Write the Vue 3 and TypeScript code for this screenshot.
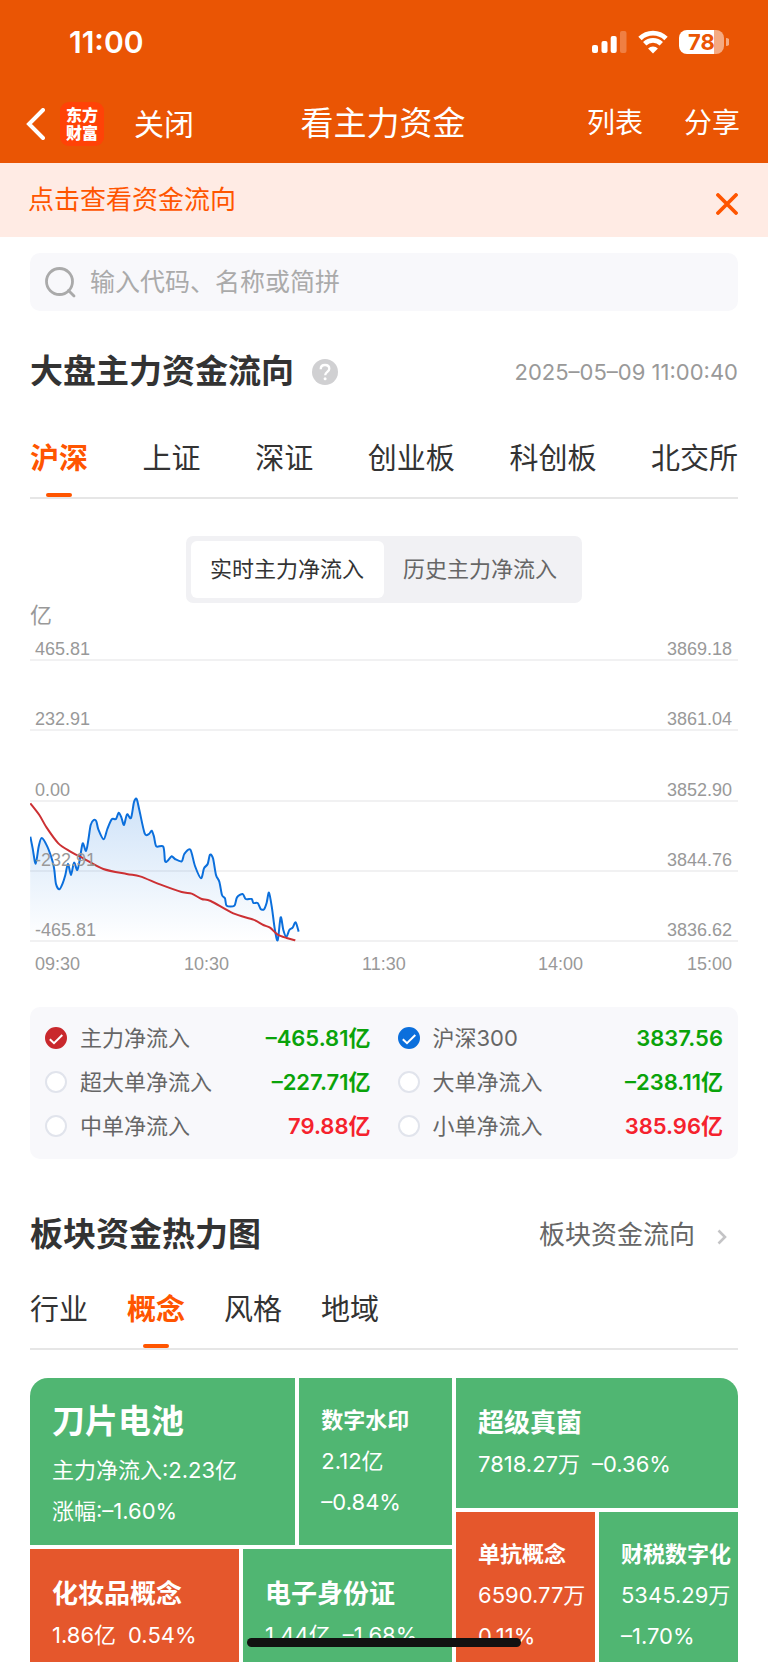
<script setup lang="ts">
import { ref } from 'vue'

type Point = [number, number]

interface Series {
  name: string
  value: string
  trend: 'up' | 'down'
  tint: string
  on: boolean
}

interface Tile {
  name: string
  lines: string[][]
  size: 'large' | 'medium' | 'small'
  trend: 'up' | 'down'
}

const markets = ['沪深', '上证', '深证', '创业板', '科创板', '北交所']
const market = ref('沪深')
const modes = ['实时主力净流入', '历史主力净流入']
const mode = ref(modes[0])
const groups = ['行业', '概念', '风格', '地域']
const group = ref('概念')
const keyword = ref('')
const noticeOpen = ref(true)

const rows = [
  { y: 20, flow: '465.81', index: '3869.18' },
  { y: 90, flow: '232.91', index: '3861.04' },
  { y: 161, flow: '0.00', index: '3852.90' },
  { y: 231, flow: '-232.91', index: '3844.76' },
  { y: 301, flow: '-465.81', index: '3836.62' },
]
const times = [
  { x: 5, text: '09:30' },
  { x: 154, text: '10:30' },
  { x: 332, text: '11:30' },
  { x: 508, text: '14:00' },
  { x: 657, text: '15:00' },
]

// Samples are kept at three units per chart pixel.
const indexSamples: Point[] = [
  [31, 170], [38, 205], [47, 251], [56, 200], [65, 174], [82, 200], [98, 245], [103, 270], [108, 312],
  [118, 328], [128, 310], [136, 285], [144, 251], [153, 285], [162, 248], [172, 270], [180, 235],
  [188, 190], [198, 213], [205, 180], [212, 135], [221, 120], [229, 124], [235, 148], [251, 178],
  [262, 147], [275, 118], [288, 117], [296, 98], [304, 112], [312, 135], [321, 103], [333, 114],
  [342, 66], [350, 57], [358, 90], [374, 160], [387, 162], [395, 152], [402, 170], [409, 199],
  [430, 200], [435, 243], [442, 243], [455, 229], [465, 237], [485, 244], [493, 222], [511, 209],
  [525, 258], [543, 295], [552, 265], [563, 252], [570, 224], [579, 235], [588, 285], [598, 305],
  [606, 345], [615, 355], [620, 377], [643, 377], [651, 352], [668, 342], [677, 357], [695, 357],
  [700, 369], [713, 369], [722, 387], [732, 388], [740, 368], [747, 338], [756, 385], [764, 445],
  [773, 481], [782, 412], [790, 450], [799, 471], [808, 450], [818, 443], [827, 427], [836, 455],
]
const flowSamples: Point[] = [
  [31, 70], [58, 105], [80, 143], [115, 190], [150, 214], [190, 235], [250, 267], [320, 282],
  [360, 289], [420, 313], [485, 336], [515, 341], [545, 357], [572, 363], [640, 400], [700, 419],
  [730, 435], [750, 443], [772, 463], [800, 474], [826, 481],
]

function curve(samples: Point[]): string {
  const pts = samples.map(([x, y]): Point => [x / 3 - 10, y / 3 + 140])
  let d = `M${pts[0][0]} ${pts[0][1]}`
  for (let i = 0; i < pts.length - 1; i++) {
    const a = pts[Math.max(i - 1, 0)]
    const b = pts[i]
    const c = pts[i + 1]
    const e = pts[Math.min(i + 2, pts.length - 1)]
    d += `C${b[0] + (c[0] - a[0]) / 7} ${b[1] + (c[1] - a[1]) / 7} ${c[0] - (e[0] - b[0]) / 7} ${c[1] - (e[1] - b[1]) / 7} ${c[0]} ${c[1]}`
  }
  return d
}
const indexLine = curve(indexSamples)
const flowLine = curve(flowSamples)
const indexArea = `${indexLine}V301H0Z`

const series = ref<Series[]>([
  { name: '主力净流入', value: '–465.81亿', trend: 'down', tint: 'red', on: true },
  { name: '沪深300', value: '3837.56', trend: 'down', tint: 'blue', on: true },
  { name: '超大单净流入', value: '–227.71亿', trend: 'down', tint: 'blue', on: false },
  { name: '大单净流入', value: '–238.11亿', trend: 'down', tint: 'blue', on: false },
  { name: '中单净流入', value: '79.88亿', trend: 'up', tint: 'blue', on: false },
  { name: '小单净流入', value: '385.96亿', trend: 'up', tint: 'blue', on: false },
])

const tileBlocks: { area: string; tiles: Tile[] }[] = [
  {
    area: 'left-top',
    tiles: [
      { name: '刀片电池', lines: [['主力净流入:2.23亿'], ['涨幅:–1.60%']], size: 'large', trend: 'down' },
      { name: '数字水印', lines: [['2.12亿'], ['–0.84%']], size: 'small', trend: 'down' },
    ],
  },
  {
    area: 'left-bottom',
    tiles: [
      { name: '化妆品概念', lines: [['1.86亿', '0.54%']], size: 'medium', trend: 'up' },
      { name: '电子身份证', lines: [['1.44亿', '–1.68%']], size: 'medium', trend: 'down' },
    ],
  },
  {
    area: 'right-top',
    tiles: [{ name: '超级真菌', lines: [['7818.27万', '–0.36%']], size: 'medium', trend: 'down' }],
  },
  {
    area: 'right-bottom',
    tiles: [
      { name: '单抗概念', lines: [['6590.77万'], ['0.11%']], size: 'small', trend: 'up' },
      { name: '财税数字化', lines: [['5345.29万'], ['–1.70%']], size: 'small', trend: 'down' },
    ],
  },
]
const columns = [tileBlocks.slice(0, 2), tileBlocks.slice(2)]
</script>

<template>
  <div class="page">
    <header class="top">
      <div class="status">
        <span class="clock">11:00</span>
        <div class="status-icons">
          <svg width="35" height="24" viewBox="0 0 35 24" fill="#fff" aria-hidden="true">
            <rect x="0" y="15" width="6" height="8" rx="2" />
            <rect x="9.500" y="11" width="6" height="12" rx="2" />
            <rect x="18.700" y="6" width="6" height="17" rx="2" />
            <rect x="28" y="1" width="6.500" height="22" rx="2" opacity=".25" />
          </svg>
          <svg width="30" height="24" viewBox="0 0 30 24" aria-hidden="true">
            <g fill="none" stroke="#fff" stroke-width="4.800">
              <path d="M2 8.500a18.500 18.500 0 0 1 26 0" />
              <path d="M6.700 13.800a12 12 0 0 1 16.600 0" />
            </g>
            <path fill="#fff" d="M15 23.500l-4.900-5a6.900 6.900 0 0 1 9.800 0z" />
          </svg>
          <div class="battery">
            <span class="cell">78</span>
            <svg width="3" height="8" viewBox="0 0 3 8" aria-hidden="true">
              <path d="M0 0a4 4 0 0 1 0 8z" fill="#fff" opacity=".5" />
            </svg>
          </div>
        </div>
      </div>
      <nav class="nav">
        <div class="nav-side">
          <button class="back" aria-label="返回">
            <svg width="19" height="32" viewBox="0 0 19 32" aria-hidden="true">
              <path d="M17 2L3 16l14 14" fill="none" stroke="#fff" stroke-width="4" stroke-linecap="round" />
            </svg>
          </button>
          <span class="logo"><span>东方</span><span>财富</span></span>
          <button class="close">关闭</button>
        </div>
        <h1>看主力资金</h1>
        <div class="nav-side nav-end">
          <button>列表</button>
          <button>分享</button>
        </div>
      </nav>
    </header>

    <div v-if="noticeOpen" class="notice">
      <a href="#flow">点击查看资金流向</a>
      <button aria-label="关闭提示" @click="noticeOpen = false">
        <svg width="22" height="22" viewBox="0 0 22 22" aria-hidden="true">
          <path d="M2 2l18 18M20 2L2 20" fill="none" stroke="#ff5500" stroke-width="3.800" stroke-linecap="round" />
        </svg>
      </button>
    </div>

    <main>
      <label class="search">
        <svg width="31" height="31" viewBox="0 0 31 31" fill="none" stroke="#aaa" stroke-width="2.800" aria-hidden="true">
          <circle cx="14.500" cy="14.500" r="13" />
          <path d="M23.500 23.500l5.500 5.500" stroke-linecap="round" />
        </svg>
        <input v-model="keyword" type="text" aria-label="搜索" placeholder="输入代码、名称或简拼" />
      </label>

      <section id="flow">
        <div class="heading first">
          <h2>大盘主力资金流向</h2>
          <button class="help" aria-label="说明">
            <svg width="26" height="26" viewBox="0 0 26 26" aria-hidden="true">
              <circle cx="13" cy="13" r="13" fill="#d0d0d2" />
              <path d="M8.700 10.200c0-2.600 1.800-4.200 4.300-4.200s4.300 1.500 4.300 3.800c0 3-4.100 3.300-4.100 6.500" fill="none" stroke="#fff" stroke-width="2.300" />
              <circle cx="13.100" cy="19.700" r="1.500" fill="#fff" />
            </svg>
          </button>
          <time>2025–05–09 11:00:40</time>
        </div>

        <div class="tabs spread">
          <button v-for="m in markets" :key="m" :class="{ active: m === market }" @click="market = m">{{ m }}</button>
        </div>

        <div class="segment">
          <button v-for="m in modes" :key="m" :class="{ active: m === mode }" @click="mode = m">{{ m }}</button>
        </div>

        <p class="unit">亿</p>
        <svg class="chart" viewBox="0 0 708 340" role="img" aria-label="主力净流入走势">
          <defs>
            <linearGradient id="fade" x1="0" y1="0" x2="0" y2="1">
              <stop offset="0" stop-color="#0b6fdc" stop-opacity=".2" />
              <stop offset="1" stop-color="#0b6fdc" stop-opacity="0" />
            </linearGradient>
          </defs>
          <path v-for="r in rows" :key="r.y" :d="`M0 ${r.y}H708`" stroke="#ececee" stroke-width="1.500" />
          <path :d="indexArea" fill="url(#fade)" />
          <path :d="indexLine" fill="none" stroke="#0b6fdc" stroke-width="2" stroke-linejoin="round" />
          <path :d="flowLine" fill="none" stroke="#cc3033" stroke-width="2" stroke-linejoin="round" />
          <g v-for="r in rows" :key="r.flow">
            <text x="5" :y="r.y - 5">{{ r.flow }}</text>
            <text x="702" :y="r.y - 5" text-anchor="end">{{ r.index }}</text>
          </g>
          <text v-for="t in times" :key="t.text" :x="t.x" y="330">{{ t.text }}</text>
        </svg>

        <div class="legend">
          <label v-for="s in series" :key="s.name">
            <span class="tick" :class="s.tint">
              <input v-model="s.on" type="checkbox" />
              <svg v-if="s.on" width="22" height="22" viewBox="0 0 22 22" aria-hidden="true">
                <path d="M4.800 12.200l4.200 4L17.300 8" fill="none" stroke="#fff" stroke-width="2" />
              </svg>
            </span>
            <span class="series-name">{{ s.name }}</span>
            <strong :class="s.trend">{{ s.value }}</strong>
          </label>
        </div>
      </section>

      <section>
        <div class="heading second">
          <h2>板块资金热力图</h2>
          <a class="more" href="#sectors">
            板块资金流向
            <svg width="10" height="16" viewBox="0 0 10 16" aria-hidden="true">
              <path d="M1.500 1.500L8 8l-6.500 6.500" fill="none" stroke="#c4c4c6" stroke-width="2.600" />
            </svg>
          </a>
        </div>

        <div class="tabs packed">
          <button v-for="g in groups" :key="g" :class="{ active: g === group }" @click="group = g">{{ g }}</button>
        </div>

        <div id="sectors" class="heatmap">
          <div v-for="(blocks, i) in columns" :key="i" class="column">
            <div v-for="b in blocks" :key="b.area" class="block" :class="b.area">
              <article v-for="t in b.tiles" :key="t.name" class="tile" :class="[t.size, t.trend]">
                <h3>{{ t.name }}</h3>
                <p v-for="(line, n) in t.lines" :key="n">
                  <span v-for="part in line" :key="part">{{ part }}</span>
                </p>
              </article>
            </div>
          </div>
        </div>
      </section>
    </main>
    <div class="home-bar"></div>
  </div>
</template>

<style>
body {
  margin: 0;
  background: #fff;
}
</style>

<style scoped>
.page {
  padding-bottom: 1px;
  background: #fff;
  color: #333;
  font-family: Inter, "Noto Sans CJK SC", sans-serif;
  font-size: 22px;
  line-height: 1.2;
}
button {
  margin: 0;
  padding: 0;
  border: 0;
  background: none;
  color: inherit;
  font: inherit;
  white-space: nowrap;
  cursor: pointer;
}
svg {
  display: block;
  flex: none;
}
a {
  color: inherit;
  text-decoration: none;
}
h1,
h2,
h3,
p {
  margin: 0;
}
.top {
  background: #ea5504;
  color: #fff;
}
.status {
  display: flex;
  align-items: center;
  justify-content: space-between;
  height: 84px;
  padding: 0 39px 0 69px;
}
.clock {
  font-size: 30px;
  font-weight: 600;
}
.status-icons {
  display: flex;
  align-items: center;
  gap: 11px;
}
.battery {
  display: flex;
  align-items: center;
  gap: 2px;
}
.cell {
  width: 45px;
  height: 24px;
  border-radius: 8px;
  background: linear-gradient(90deg, #fff 35px, rgba(255, 255, 255, 0.5) 35px);
  color: #ea5504;
  font-weight: 700;
  line-height: 24px;
  text-align: center;
}
.nav {
  display: grid;
  grid-template-columns: 1fr auto 1fr;
  align-items: center;
  height: 79px;
  padding: 0 28px 0 26px;
  font-size: 28px;
}
.nav-side {
  display: flex;
  align-items: center;
}
.nav-end {
  justify-content: flex-end;
  gap: 41px;
}
.nav h1 {
  font-size: 33px;
  font-weight: 400;
}
.logo {
  display: flex;
  flex-direction: column;
  align-items: center;
  justify-content: center;
  width: 44px;
  height: 44px;
  margin-left: 15px;
  border-radius: 9px;
  background: #ff4207;
  font-size: 16px;
  font-weight: 900;
  line-height: 18px;
}
.close {
  margin-left: 30px;
  font-size: 30px;
}
.notice {
  display: flex;
  align-items: center;
  justify-content: space-between;
  height: 74px;
  padding: 0 30px 0 28px;
  background: #ffebe4;
  color: #ff5500;
  font-size: 26px;
}
.notice button {
  padding-top: 8px;
}
main {
  padding: 16px 30px 0;
}
.search {
  display: flex;
  align-items: center;
  gap: 14px;
  height: 58px;
  padding: 0 15px;
  border-radius: 10px;
  background: #f8f8fb;
}
.search input {
  flex: 1;
  min-width: 0;
  padding: 0;
  border: 0;
  outline: 0;
  background: none;
  color: #333;
  font: inherit;
  font-size: 25px;
}
.search input::placeholder {
  color: #aaa;
  opacity: 1;
}
.heading {
  display: flex;
  align-items: center;
  height: 60px;
}
.first {
  margin-top: 31px;
}
.second {
  margin-top: 46px;
}
h2 {
  font-size: 33px;
  font-weight: 600;
}
.help {
  margin-left: 18px;
}
.heading time {
  margin-left: auto;
  color: #999;
}
.more {
  display: flex;
  align-items: center;
  gap: 22px;
  margin-left: auto;
  padding-right: 11px;
  color: #666;
  font-size: 26px;
}
.more svg {
  margin-top: 4px;
}
.tabs {
  display: flex;
  border-bottom: 2px solid #e6e6e6;
  font-size: 29px;
}
.spread {
  justify-content: space-between;
  margin-top: 19px;
}
.packed {
  gap: 39px;
  margin-top: 7px;
}
.tabs button {
  position: relative;
  height: 76px;
}
.tabs .active {
  color: #ff5500;
  font-weight: 600;
}
.tabs .active::after {
  content: "";
  position: absolute;
  bottom: 0;
  left: 50%;
  width: 26px;
  height: 4px;
  margin-left: -13px;
  border-radius: 2px;
  background: #ff5500;
}
.segment {
  display: flex;
  width: fit-content;
  margin: 37px auto 0;
  padding: 5px;
  border-radius: 7px;
  background: #f1f1f4;
  color: #666;
}
.segment button {
  height: 57px;
  padding: 0 20px 0 19px;
  border-radius: 6px;
}
.segment .active {
  background: #fff;
  color: #333;
}
.unit {
  color: #999;
  line-height: 24px;
}
.chart {
  width: 100%;
  height: auto;
  margin-top: 13px;
}
.chart text {
  fill: #999;
  font-family: "Liberation Sans", Arial, sans-serif;
  font-size: 18px;
}
.legend {
  display: grid;
  grid-template-columns: 1fr 1fr;
  column-gap: 27px;
  margin-top: 27px;
  padding: 9px 15px 11px;
  border-radius: 10px;
  background: #f8f8fb;
}
.legend label {
  display: flex;
  align-items: center;
  height: 44px;
}
.tick {
  position: relative;
  width: 22px;
  height: 22px;
  margin-right: 13px;
}
.tick input {
  display: block;
  width: 22px;
  height: 22px;
  margin: 0;
  border: 2px solid #e1e4ec;
  border-radius: 50%;
  background: #fff;
  appearance: none;
}
.tick svg {
  position: absolute;
  inset: 0;
  pointer-events: none;
}
.red input:checked {
  border-color: #c9292d;
  background: #c9292d;
}
.blue input:checked {
  border-color: #0b6fdc;
  background: #0b6fdc;
}
.series-name {
  color: #666;
}
.legend strong {
  margin-left: auto;
  font-weight: 600;
}
.legend .down {
  color: #0aa30a;
}
.legend .up {
  color: #f5222d;
}
.heatmap {
  display: grid;
  grid-template-columns: 422fr 282fr;
  gap: 4px;
  margin-top: 28px;
  overflow: hidden;
  border-radius: 18px 18px 0 0;
}
.column {
  display: flex;
  flex-direction: column;
  gap: 4px;
  min-width: 0;
}
.block {
  display: grid;
  grid-template-columns: 1fr 1fr;
  gap: 4px;
}
.left-top {
  grid-template-columns: 266fr 153fr;
  height: 167px;
}
.left-bottom {
  height: 113px;
}
.right-top {
  grid-template-columns: 1fr;
  height: 130px;
}
.right-bottom {
  height: 150px;
}
.tile {
  min-width: 0;
  padding: 22px 0 0 22px;
  overflow: hidden;
  color: #fff;
  line-height: 41px;
  white-space: nowrap;
}
.tile.down {
  background: #50b672;
}
.tile.up {
  background: #e5572c;
}
.tile h3 {
  font-size: 22px;
  font-weight: 600;
}
.tile.medium {
  padding-top: 24px;
}
.tile.medium h3 {
  margin-bottom: 1px;
  font-size: 26px;
}
.tile.large {
  padding-top: 23px;
}
.tile.large h3 {
  margin-bottom: 8px;
  font-size: 33px;
}
.tile p {
  display: flex;
  gap: 12px;
}
.home-bar {
  position: fixed;
  right: 0;
  bottom: 16px;
  left: 0;
  width: 274px;
  height: 9px;
  margin: 0 auto;
  border-radius: 5px;
  background: #111;
}
</style>
